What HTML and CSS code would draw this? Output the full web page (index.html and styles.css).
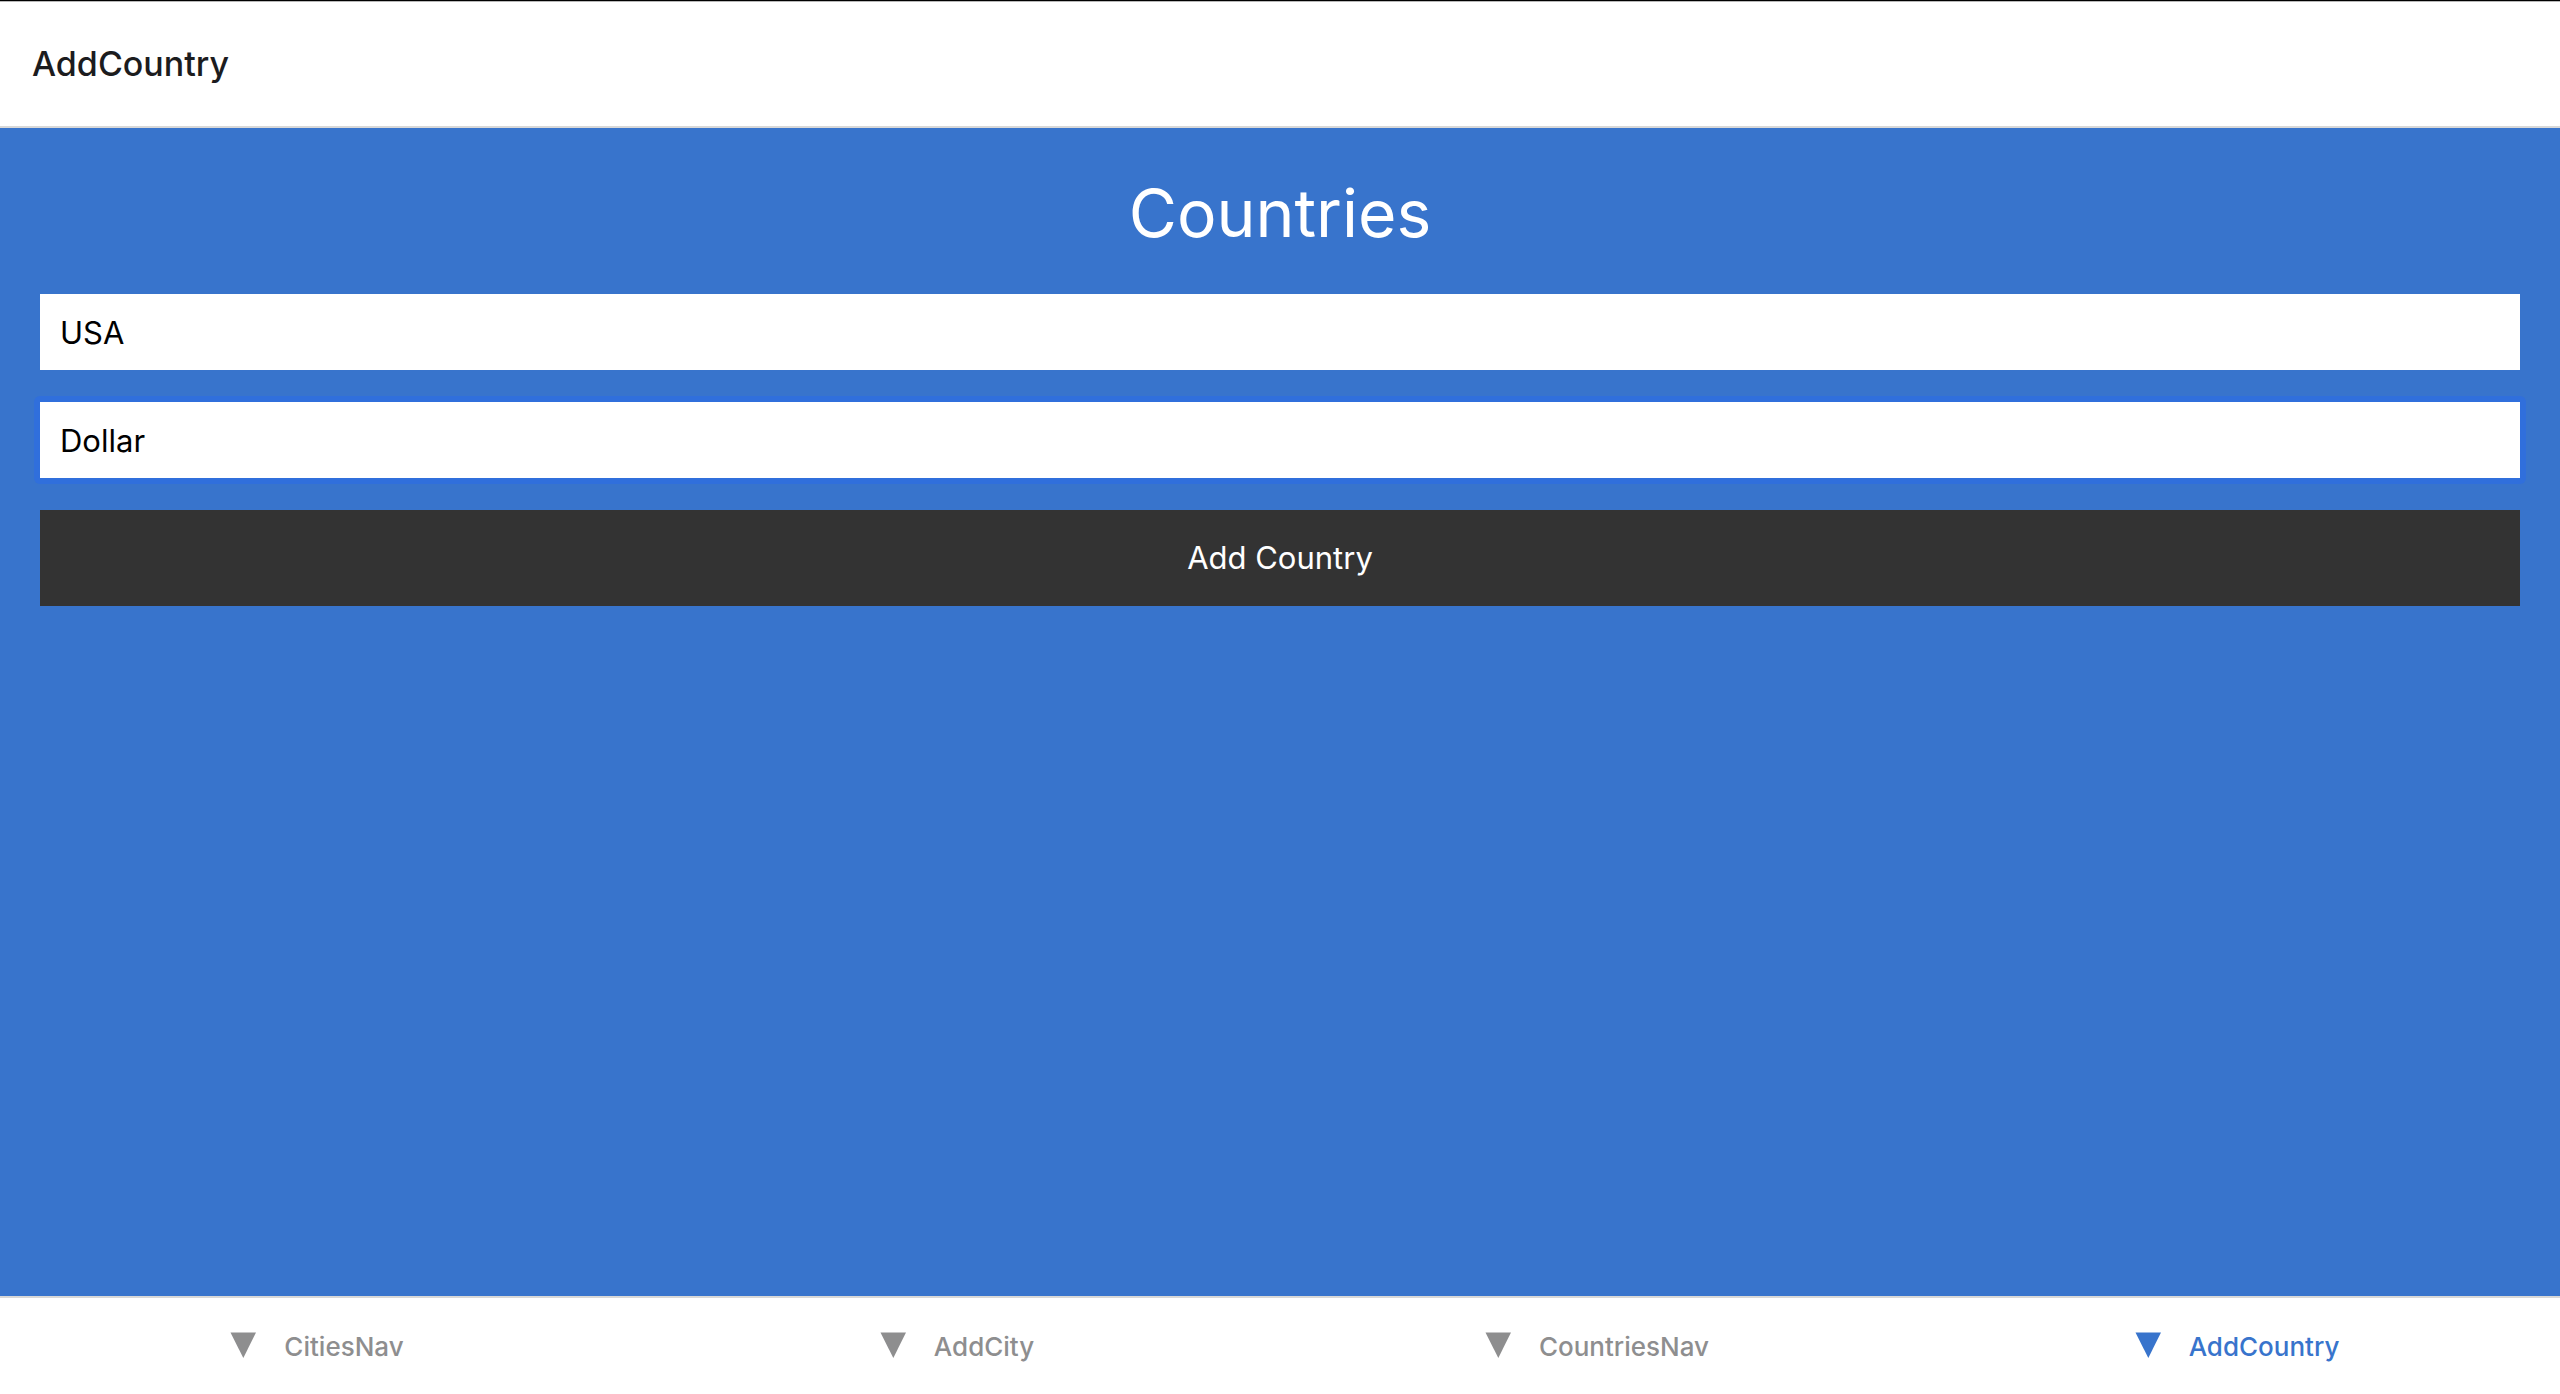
FILE: index.html
```html
<!DOCTYPE html>
<html lang="en">
<head>
  <meta charset="utf-8">
  <meta name="viewport" content="width=device-width, initial-scale=1">
  <title>AddCountry</title>
  <link rel="stylesheet" href="styles.css">
</head>
<body>
  <header class="header">
    <h1 class="header-title">AddCountry</h1>
  </header>
  <main class="screen">
    <h2 class="heading">Countries</h2>
    <form class="form">
      <div class="field">
        <input class="input" type="text" aria-label="Country name" value="USA">
      </div>
      <div class="field field-active">
        <input class="input" type="text" aria-label="Currency name" value="Dollar">
      </div>
      <button class="button" type="button">Add Country</button>
    </form>
  </main>
  <nav class="tabs">
    <a class="tab" href="#cities">
      <svg class="tab-icon" viewBox="0 0 50 50" aria-hidden="true"><path d="M12.500 10.500H38L25.300 36Z"/></svg>
      <span>CitiesNav</span>
    </a>
    <a class="tab" href="#add-city">
      <svg class="tab-icon" viewBox="0 0 50 50" aria-hidden="true"><path d="M12.500 10.500H38L25.300 36Z"/></svg>
      <span>AddCity</span>
    </a>
    <a class="tab" href="#countries">
      <svg class="tab-icon" viewBox="0 0 50 50" aria-hidden="true"><path d="M12.500 10.500H38L25.300 36Z"/></svg>
      <span>CountriesNav</span>
    </a>
    <a class="tab tab-active" href="#add-country" aria-current="page">
      <svg class="tab-icon" viewBox="0 0 50 50" aria-hidden="true"><path d="M12.500 10.500H38L25.300 36Z"/></svg>
      <span>AddCountry</span>
    </a>
  </nav>
</body>
</html>
```

FILE: styles.css
```css
* {
  box-sizing: border-box;
}

body {
  display: flex;
  flex-direction: column;
  min-height: 100vh;
  margin: 0;
  background: #fff;
  font-family: Inter, "Liberation Sans", sans-serif;
}

.header {
  display: flex;
  align-items: center;
  height: 128px;
  padding: 0 32px;
  border-top: 1px solid #000;
  border-bottom: 2px solid #d8d8d8;
  box-shadow: inset 0 1px #b8b8b8;
}

.header-title {
  margin: 0;
  color: #1c1c1e;
  font-size: 34px;
  font-weight: 500;
  line-height: 44px;
}

.screen {
  flex: 1;
  padding: 40px;
  background: #3874cc;
}

.heading {
  margin: 0 0 36px;
  color: #fff;
  font-size: 66px;
  font-weight: 400;
  line-height: 90px;
  text-align: center;
}

.form {
  display: flex;
  flex-direction: column;
  gap: 32px;
}

.field-active {
  margin: -6px;
  padding: 6px;
  border-radius: 6px;
  background: #306fdc;
}

.input {
  display: block;
  width: 100%;
  height: 76px;
  padding: 0 20px;
  border: 0;
  border-radius: 0;
  outline: 0;
  background: #fff;
  color: #000;
  font: 400 31px/40px Inter, "Liberation Sans", sans-serif;
}

.button {
  height: 96px;
  border: 0;
  background: #333;
  color: #fff;
  font: 400 31px/40px Inter, "Liberation Sans", sans-serif;
}

.tabs {
  display: flex;
  height: 98px;
  border-top: 2px solid #d8d8d8;
}

.tab {
  display: flex;
  flex: 1;
  align-items: center;
  justify-content: center;
  gap: 16px;
  padding: 2px 18px 0 0;
  color: #8e8e8f;
  font-size: 26px;
  font-weight: 500;
  line-height: 32px;
  text-decoration: none;
}

.tab-active {
  color: #3874cc;
}

.tab-icon {
  width: 50px;
  height: 50px;
  fill: currentColor;
}
```
